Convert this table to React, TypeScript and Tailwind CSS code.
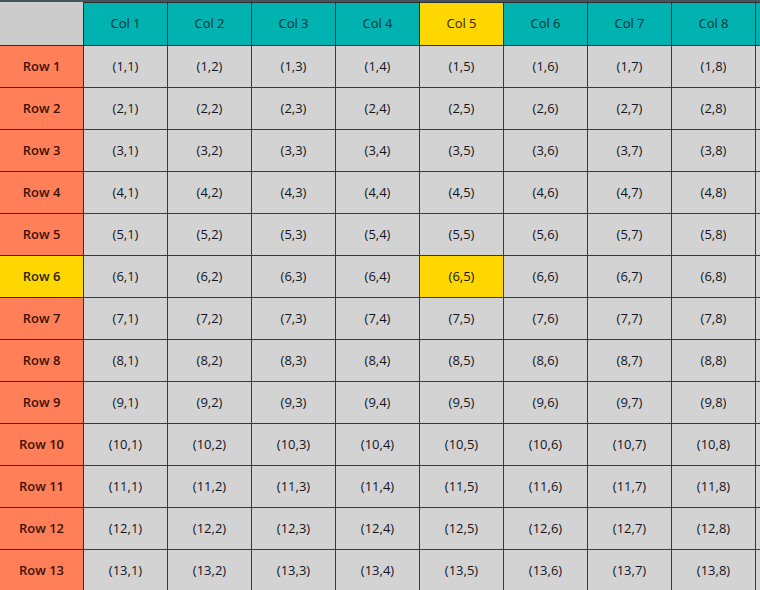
import React from 'react';

const COLS = 9;
const ROWS = 13;
const HI_ROW = 6;
const HI_COL = 5;

export default function App() {
  const cols = Array.from({ length: COLS }, (_, i) => i + 1);
  const rows = Array.from({ length: ROWS }, (_, i) => i + 1);

  return (
    <div
      className="w-[760px] h-[590px] overflow-hidden bg-[#d3d3d3]"
      style={{ fontFamily: '"Open Sans", "Noto Sans", sans-serif' }}
    >
      <div className="h-[2px] w-[860px] bg-[#45535d]" />
      <div className="grid w-[860px] grid-cols-[84px_repeat(9,84px)] grid-rows-[44px_repeat(13,42px)]">
        {/* header row */}
        <div className="bg-[#cbcbcb] border-b border-r border-[#2e2e2e]" />
        {cols.map((c) => (
          <div
            key={c}
            className={`flex items-center justify-center border-t border-b border-r border-[#2e2e2e] text-[13px] ${
              c === HI_COL ? 'bg-[#ffd700] text-[#2e2400]' : 'bg-[#00b3b0] text-[#0b3033]'
            }`}
          >
            {c <= 8 ? `Col ${c}` : ''}
          </div>
        ))}

        {/* body */}
        {rows.map((r) => (
          <React.Fragment key={r}>
            <div
              className={`flex items-center justify-center border-b border-r border-[#2e2e2e] text-[13px] font-semibold ${
                r === HI_ROW ? 'bg-[#ffd700] text-[#2e2400]' : 'bg-[#ff8058] text-[#3d1006]'
              }`}
            >
              Row {r}
            </div>
            {cols.map((c) => (
              <div
                key={c}
                className={`flex items-center justify-center border-b border-r border-[#3a3a3a] text-[13px] text-[#14141f] ${
                  r === HI_ROW && c === HI_COL ? 'bg-[#ffd700]' : 'bg-[#d3d3d3]'
                }`}
              >
                {c <= 8 ? `(${r},${c})` : ''}
              </div>
            ))}
          </React.Fragment>
        ))}
      </div>
    </div>
  );
}
